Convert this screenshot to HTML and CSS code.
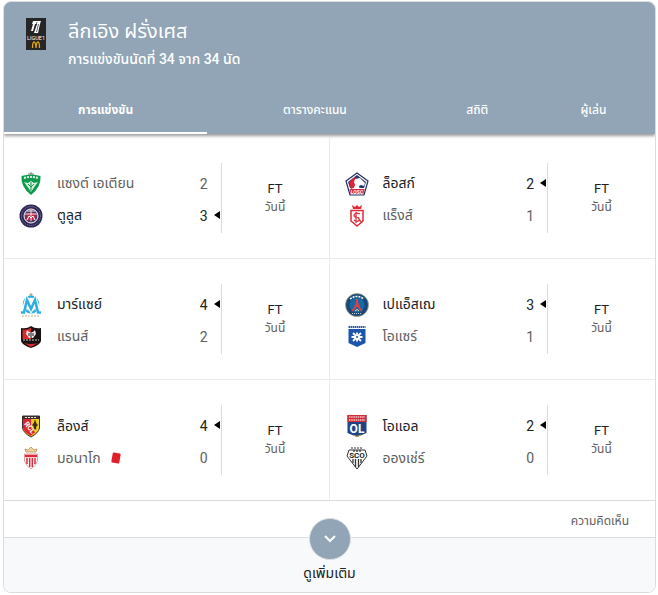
FILE: index.html
```html
<!DOCTYPE html>
<html lang="th">

	<head>
		<meta charset="UTF-8">
		<title>ลีกเอิง ฝรั่งเศส</title>

		<link rel="stylesheet" href="styles.css">
	</head>

	<body>

		<div class="card">
			<header class="header">
				<div class="league">
					<svg class="leagueLogo" viewBox="0 0 20 32">
						<rect width="20" height="32" fill="#262626" />
						<path d="M7 3h8l-1 3-2 9H8l3-9H9l-2 7H5l2-7H6z" fill="#fff" />
						<path d="M11 4l-1 3M12.500 6l-2 8" stroke="#262626" stroke-width=".7" />
						<text x="10" y="21.500" text-anchor="middle" font-size="5.500" fill="#fff">LIGUE1</text>
						<path d="M6.500 30c0-8 3-8 3.500 0 .5-8 3.500-8 3.500 0" fill="none" stroke="#e5a50a" stroke-width="1.300" />
					</svg>
					<div>
						<h1 class="title">ลีกเอิง ฝรั่งเศส</h1>
						<p class="subtitle">การแข่งขันนัดที่ 34 จาก 34 นัด</p>
					</div>
				</div>
				<nav class="tabs">
					<button class="tab active">การแข่งขัน</button>
					<button class="tab">ตารางคะแนน</button>
					<button class="tab">สถิติ</button>
					<button class="tab">ผู้เล่น</button>
				</nav>
			</header>

			<main class="matches">
				<article class="match">
					<div class="teams">
						<div class="team">
							<svg class="logo" viewBox="0 0 24 24">
								<path d="M2.500 4q9.500-3 19 0 1 11-9.500 19Q1.500 15 2.500 4z" fill="#0c9a4d" />
								<path d="M5 6q7-2 14 0" fill="none" stroke="#d8f2e2" stroke-width="2" stroke-dasharray="2 1" />
								<path d="M5 10l4 1 3-2 3 2 4-1-3 4-4 6-4-6z" fill="#d5eede" />
								<path d="M12 10v9M9 12l3 3 3-3" fill="none" stroke="#0c9a4d" />
								<path d="M9 2h6M12 0v2" stroke="#777" />
							</svg>
							<span class="name">แซงต์ เอเตียน</span>
							<span class="score">2</span>
						</div>
						<div class="team winner">
							<svg class="logo" viewBox="0 0 24 24">
								<circle cx="12" cy="12" r="11.500" fill="#2b2453" />
								<circle cx="12" cy="12" r="9.500" fill="none" stroke="#9a93b5" stroke-dasharray="1 1" />
								<circle cx="12" cy="12" r="7" fill="#54396a" stroke="#fff" />
								<path d="M7.500 9h9v7h-9z" fill="#c32848" />
								<path d="M12 6v11M6 10h12M8 7l8 0" stroke="#eadfe5" />
								<path d="M8 16l2-4 2 2 2-2 2 4" fill="none" stroke="#fff" />
							</svg>
							<span class="name">ตูลูส</span>
							<span class="score">3</span>
						</div>
					</div>
					<div class="status"><span class="ft">FT</span><span class="day">วันนี้</span></div>
				</article>

				<article class="match">
					<div class="teams">
						<div class="team winner">
							<svg class="logo" viewBox="0 0 24 24">
								<path d="M12 1l11 8-4 14H5L1 9z" fill="#fff" stroke="#20305f" stroke-width="1.200" />
								<path d="M12 3l9 7-2 6H5L3 10z" fill="#27346d" />
								<path d="M11 4l-7 6 2 7 4-2 2-4-2-3z" fill="#df2338" />
								<path d="M10 7l5-1 5 5-1 3-3-1-2 1 1 4H8l2-5-1-3z" fill="#fff" />
								<path d="M4.500 17h15l-1 5h-13z" fill="#d9233b" />
								<text x="12" y="21.500" text-anchor="middle" font-size="5" font-weight="700" fill="#fff">LOSC</text>
							</svg>
							<span class="name">ล็อสก์</span>
							<span class="score">2</span>
						</div>
						<div class="team">
							<svg class="logo" viewBox="0 0 24 24">
								<path d="M7 1l3 2 2-2 2 2 3-2-1 4H8z" fill="#e02936" />
								<path d="M6 6.500h12V17l-6 5-6-5z" fill="#fff" stroke="#e02936" stroke-width="1.500" />
								<path d="M15 10q-5-2-6 1 0 2 3 2.500 3 1 2 3-2 2-5-.5M11 8v11M13 13l3 5" fill="none" stroke="#e02936" stroke-width="1.200" />
							</svg>
							<span class="name">แร็งส์</span>
							<span class="score">1</span>
						</div>
					</div>
					<div class="status"><span class="ft">FT</span><span class="day">วันนี้</span></div>
				</article>

				<article class="match">
					<div class="teams">
						<div class="team winner">
							<svg class="logo" viewBox="0 0 24 24">
								<path d="M12 0v3M10.500 1.500h3" stroke="#c5a45b" />
								<ellipse cx="12" cy="11.500" rx="7" ry="8" fill="none" stroke="#2faee0" stroke-width="2.500" />
								<path d="M4 20L8 7l4 9 4-9 4 13" fill="none" stroke="#fff" stroke-width="4.500" />
								<path d="M2 19.500h3L8 7l4 9 4-9 3 12.500h3" fill="none" stroke="#2faee0" stroke-width="2.500" />
								<path d="M3 23h18" stroke="#c9b27b" stroke-dasharray="2 1" />
							</svg>
							<span class="name">มาร์แซย์</span>
							<span class="score">4</span>
						</div>
						<div class="team">
							<svg class="logo" viewBox="0 0 24 24">
								<path d="M2 3q6 1 10-2 4 3 10 2v13q-1 4-10 7-9-3-10-7z" fill="#171214" />
								<path d="M3.500 4.500q5 1 8.500-2V14H3.500z" fill="#d82b2f" />
								<path d="M8 5l2 2h4l2-2 1 4-3 4h-4L7 9z" fill="#f5e8e6" />
								<path d="M10 8v3M14 8v3M12 7v6" stroke="#171214" />
								<path d="M4 15h16" stroke="#d9c9c5" stroke-dasharray="2 1" />
								<path d="M5 18q7 2 14 0l-7 4z" fill="#d82b2f" />
							</svg>
							<span class="name">แรนส์</span>
							<span class="score">2</span>
						</div>
					</div>
					<div class="status"><span class="ft">FT</span><span class="day">วันนี้</span></div>
				</article>

				<article class="match">
					<div class="teams">
						<div class="team winner">
							<svg class="logo" viewBox="0 0 24 24">
								<circle cx="12" cy="12" r="11.500" fill="#17497c" stroke="#b3a67d" stroke-width=".7" />
								<circle cx="12" cy="12" r="7.500" fill="#1769a3" />
								<path d="M5 6q7-5 14 0" fill="none" stroke="#fff" stroke-width="1.500" stroke-dasharray="2 1" />
								<path d="M12 6q0 8-5 12M12 6q0 8 5 12M9.500 13h5" fill="none" stroke="#e43c45" stroke-width="1.800" />
								<path d="M10 18q2-3 4 0" fill="none" stroke="#f0d98a" />
								<path d="M7 20.500h10" stroke="#c9d6e5" stroke-dasharray="1 1" />
							</svg>
							<span class="name">เปแอ็สเฌ</span>
							<span class="score">3</span>
						</div>
						<div class="team">
							<svg class="logo" viewBox="0 0 24 24">
								<path d="M3.500 2h17" stroke="#3158a5" stroke-width="2" stroke-dasharray="1.500 .5" />
								<path d="M3.500 4h17v14L12 22l-8.500-4z" fill="#1d55aa" />
								<path d="M8 8l8 8M16 8l-8 8M6.500 12h11M12 7.500v9" stroke="#fff" stroke-width="1.800" />
								<circle cx="12" cy="12" r="1" fill="#1d55aa" />
							</svg>
							<span class="name">โอแซร์</span>
							<span class="score">1</span>
						</div>
					</div>
					<div class="status"><span class="ft">FT</span><span class="day">วันนี้</span></div>
				</article>

				<article class="match">
					<div class="teams">
						<div class="team winner">
							<svg class="logo" viewBox="0 0 24 24">
								<path d="M3.500 2h17v12q-1 5-8.500 9-7.500-4-8.500-9z" fill="#f2cf1d" stroke="#3b2d2a" />
								<path d="M4 5h8v17q-7-4-8-8z" fill="#dc2730" />
								<path d="M4 2h16v3H4z" fill="#3b2d2a" />
								<path d="M6 3.500h12" stroke="#ece5d8" stroke-dasharray="2 1" />
								<path d="M16 7l2 3-1 5h-2l-1-5z" fill="#3b2d2a" />
								<path d="M16 6v10M13 11h6" stroke="#3b2d2a" />
								<path d="M6 8l8 12" stroke="#dc2730" stroke-width="5" />
								<text x="5" y="10" font-size="7" font-weight="700" fill="#fff" transform="rotate(52 5 10)">RCL</text>
							</svg>
							<span class="name">ล็องส์</span>
							<span class="score">4</span>
						</div>
						<div class="team">
							<svg class="logo" viewBox="0 0 24 24">
								<path d="M7 6L6 3l3 1 3-3 3 3 3-1-1 3z" fill="#f1d5a4" stroke="#bd8f53" stroke-width=".8" />
								<path d="M5.500 8h13v7q-1 4-6.500 8-5.500-4-6.500-8z" fill="#fff" stroke="#dba29c" />
								<path d="M8 12v6M10.700 12v9M13.300 12v9M16 12v6" stroke="#df2a3b" stroke-width="1.500" />
								<path d="M6 10h12" stroke="#df2a3b" stroke-width="2.500" />
							</svg>
							<span class="name">มอนาโก</span>
							<svg class="redCard" viewBox="0 0 10 12">
								<rect x="1" y="1" width="8" height="10" rx="1" fill="#e01f2b" transform="rotate(10 5 6)" />
							</svg>
							<span class="score">0</span>
						</div>
					</div>
					<div class="status"><span class="ft">FT</span><span class="day">วันนี้</span></div>
				</article>

				<article class="match">
					<div class="teams">
						<div class="team winner">
							<svg class="logo" viewBox="0 0 24 24">
								<path d="M2.500 1h19v18L12 23l-9.500-4z" fill="#1f4385" />
								<path d="M2.500 1h19v7h-19z" fill="#d42b36" />
								<path d="M4 3h16M4 6h16" stroke="#f3c9c9" stroke-width="1.300" stroke-dasharray="1.500 .7" />
								<text x="12" y="18.500" text-anchor="middle" font-size="12" font-weight="700" fill="#fff">OL</text>
								<path d="M8 21l4 1.500 4-1.500" fill="none" stroke="#c9a44d" />
							</svg>
							<span class="name">โอแอล</span>
							<span class="score">2</span>
						</div>
						<div class="team">
							<svg class="logo" viewBox="0 0 24 24">
								<path d="M4 4h16l2 6-10 13L2 10z" fill="#fff" stroke="#333" />
								<path d="M6 2h12" stroke="#777" stroke-width="1.500" stroke-dasharray="2 1" />
								<path d="M8 13v4M10.500 13v8M13.500 13v8M16 13v4M9 4v2M12 4v2M15 4v2" stroke="#333" stroke-width="1.300" />
								<text x="12" y="12" text-anchor="middle" font-size="8" font-weight="700" fill="#222">SCO</text>
							</svg>
							<span class="name">อองเช่ร์</span>
							<span class="score">0</span>
						</div>
					</div>
					<div class="status"><span class="ft">FT</span><span class="day">วันนี้</span></div>
				</article>
			</main>

			<div class="feedback"><a href="#">ความคิดเห็น</a></div>

			<button class="more">
				<span class="circle">
					<svg width="14" height="14" viewBox="0 0 14 14">
						<path d="M2 4l5 5 5-5" fill="none" stroke="#fff" stroke-width="2" />
					</svg>
				</span>
				<span>ดูเพิ่มเติม</span>
			</button>
		</div>

	</body>

</html>
```

FILE: styles.css
```css
* {
	margin: 0;
	padding: 0;
	box-sizing: border-box;
}

body {
	padding: 1px 2px 1px 3px;
	background-color: #fff;
	font-family: Roboto, "Liberation Sans", "Noto Sans Thai", sans-serif;
	color: #202124;
}

button {
	border: none;
	background: none;
	font-family: inherit;
	cursor: pointer;
}

.card {
	border: 1px solid #dadce0;
	border-radius: 8px;
	overflow: hidden;
}

.header {
	position: relative;
	background-color: #91a5b6;
	color: #fff;
	box-shadow: 0 2px 3px rgba(0, 0, 0, 0.4);
}

.league {
	display: flex;
	gap: 22px;
	height: 84px;
	padding: 16px 22px 0;
}

.leagueLogo {
	width: 20px;
	height: 32px;
}

.title {
	font-size: 20px;
	line-height: 27px;
	font-weight: 400;
}

.subtitle {
	font-size: 14px;
	line-height: 28px;
	font-weight: 500;
}

.tabs {
	display: grid;
	grid-template-columns: 203fr 215fr 109fr 123fr;
}

.tab {
	height: 48px;
	border-top: 2px solid transparent;
	border-bottom: 2px solid transparent;
	font-size: 12px;
	line-height: 20px;
	font-weight: 500;
	color: #fff;
}

.tab.active {
	border-bottom-color: #fff;
	font-weight: 700;
}

.matches {
	display: grid;
	grid-template-columns: 1fr 1fr;
	padding-top: 4px;
	border-bottom: 1px solid #dadce0;
}

.match {
	display: flex;
	align-items: center;
	height: 121px;
	padding-bottom: 1px;
	border-bottom: 1px solid #ebebeb;
}

.match:nth-child(odd) {
	border-right: 1px solid #ebebeb;
}

.match:nth-last-child(-n+2) {
	height: 120px;
	padding-bottom: 0;
	border-bottom: none;
}

.teams {
	flex: 1;
	padding: 5px 0 1px;
	border-right: 1px solid #dadce0;
}

.team {
	display: flex;
	align-items: center;
	height: 32px;
	padding: 0 13px 0 15px;
	font-size: 14px;
	color: #5e5e5e;
}

.winner {
	position: relative;
	color: #202124;
}

.winner::after {
	content: "";
	position: absolute;
	right: 1px;
	top: 11px;
	border: 4px solid transparent;
	border-left: none;
	border-right: 6px solid #000;
}

.logo {
	width: 24px;
	height: 24px;
	margin-right: 14px;
}

.redCard {
	width: 10px;
	height: 12px;
	margin-left: 10px;
}

.score {
	margin-left: auto;
}

.status {
	width: 107px;
	display: flex;
	flex-direction: column;
	align-items: center;
	line-height: 18px;
}

.ft {
	font-size: 13px;
}

.day {
	font-size: 12px;
	color: #5e5e5e;
}

.feedback {
	height: 36px;
	padding: 10px 26px;
	text-align: right;
	font-size: 12px;
	line-height: 20px;
}

.feedback a {
	color: #5e5e5e;
	text-decoration: none;
}

.more {
	display: flex;
	flex-direction: column;
	align-items: center;
	width: 100%;
	height: 55px;
	border-top: 1px solid #dadce0;
	background-color: #f8f9fb;
	font-size: 14px;
	line-height: 24px;
	color: #202124;
}

.circle {
	display: flex;
	align-items: center;
	justify-content: center;
	width: 42px;
	height: 42px;
	margin-top: -20px;
	margin-bottom: 1px;
	border: 1px solid #dadce0;
	border-radius: 50%;
	background-color: #91a5b6;
}
```
